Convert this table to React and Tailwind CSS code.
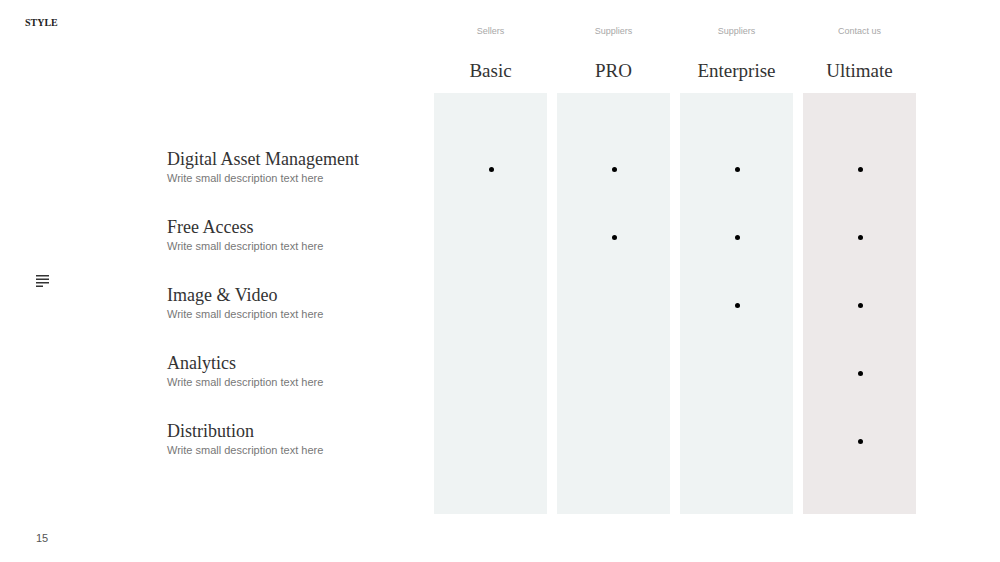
const features = [
  'Digital Asset Management',
  'Free Access',
  'Image & Video',
  'Analytics',
  'Distribution',
]

const plans = [
  { label: 'Sellers', name: 'Basic', count: 1, bg: 'bg-[#eff3f3]' },
  { label: 'Suppliers', name: 'PRO', count: 2, bg: 'bg-[#eff3f3]' },
  { label: 'Suppliers', name: 'Enterprise', count: 3, bg: 'bg-[#eff3f3]' },
  { label: 'Contact us', name: 'Ultimate', count: 5, bg: 'bg-[#ede9e9]' },
]

function MenuIcon() {
  return (
    <svg width="14" height="13" viewBox="0 0 14 13" className="block">
      <rect x="0" y="1" width="13" height="1.5" fill="#333" />
      <rect x="0" y="4.5" width="13" height="1.5" fill="#333" />
      <rect x="0" y="8" width="13" height="1.5" fill="#333" />
      <rect x="0" y="11.5" width="7" height="1.5" fill="#333" />
    </svg>
  )
}

function PlanColumn({ plan }) {
  return (
    <div className="w-[113px] flex flex-col items-stretch pt-[24px]">
      <div className="h-[14px] leading-[14px] text-center text-[9px] text-[#a8a8a8] font-['Liberation_Sans',sans-serif]">
        {plan.label}
      </div>
      <div className="mt-[20px] h-[26px] leading-[26px] text-center text-[19px] text-[#333] font-['Liberation_Serif',serif]">
        {plan.name}
      </div>
      <div className={`mt-[9px] h-[421px] pt-[42px] ${plan.bg}`}>
        {features.map((f, i) => (
          <div key={f} className="h-[68px] flex items-center justify-center pl-[1px]">
            {i < plan.count && <div className="w-[5px] h-[5px] rounded-full bg-black" />}
          </div>
        ))}
      </div>
    </div>
  )
}

export default function App() {
  return (
    <div className="w-[1000px] h-[562px] bg-white flex overflow-hidden">
      <div className="w-[80px] h-full flex flex-col justify-between py-[17px]">
        <div className="pl-[25px] text-[10px] leading-[12px] font-bold text-[#222] font-['Liberation_Serif',serif]">
          STYLE
        </div>
        <div className="pl-[36px]">
          <MenuIcon />
        </div>
        <div className="pl-[36px] text-[11px] leading-[14px] text-[#555] font-['Liberation_Sans',sans-serif]">
          15
        </div>
      </div>

      <div className="w-[354px] pl-[87px] pt-[135px]">
        {features.map((f) => (
          <div key={f} className="h-[68px] flex flex-col justify-center pb-[5px]">
            <div className="text-[18px] leading-[22px] text-[#333] font-['Liberation_Serif',serif]">{f}</div>
            <div className="mt-[1px] text-[11px] leading-[14px] text-[#777] font-['Liberation_Sans',sans-serif]">
              Write small description text here
            </div>
          </div>
        ))}
      </div>

      <div className="flex gap-[10px]">
        {plans.map((p) => (
          <PlanColumn key={p.name} plan={p} />
        ))}
      </div>
    </div>
  )
}
